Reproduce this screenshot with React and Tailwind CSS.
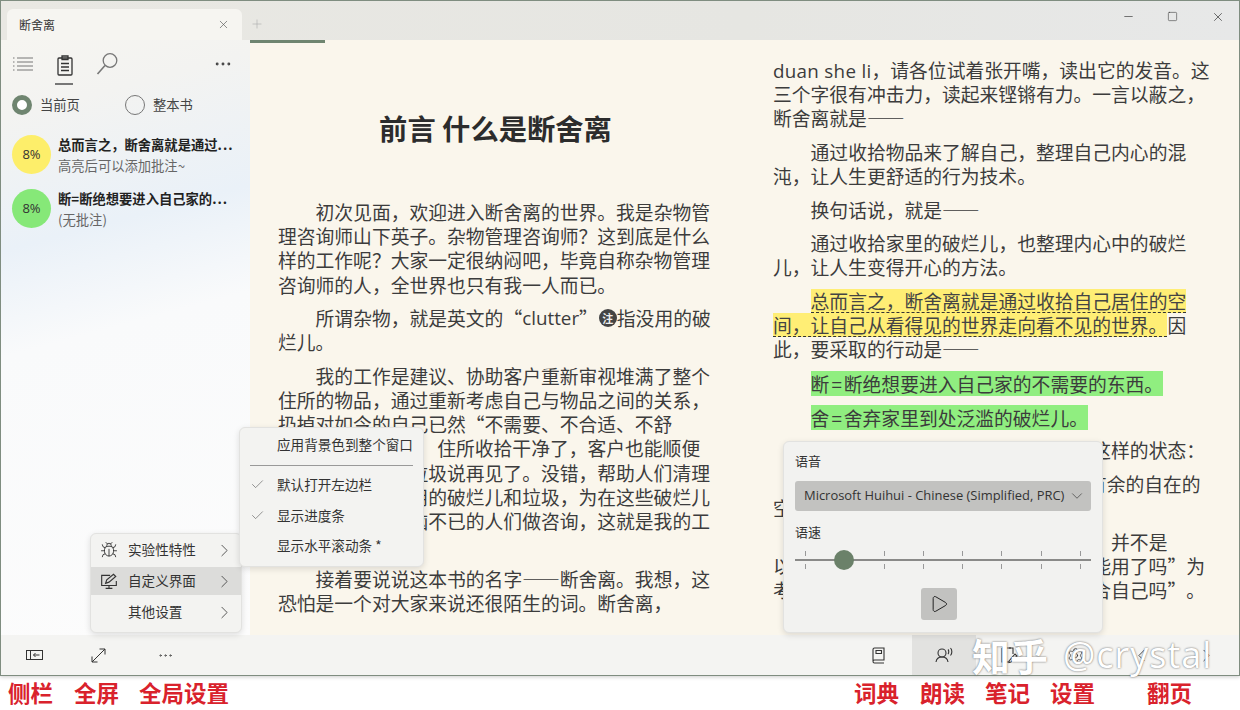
import React from "react";
import { Bug, ChevronRight, ChevronLeft, ChevronDown, Check, X, Minus, Square, Plus, MoreHorizontal, Play, Settings } from "lucide-react";

const LAT = "font-['Open_Sans',sans-serif]";

function P({ lines, indent = true }) {
  return (
    <div className="mb-[9.4px]">
      {lines.map((l, i) => (
        <div key={i} className={`h-[24.2px] whitespace-nowrap ${i === 0 && indent ? "pl-[37.6px]" : ""}`}>{l}</div>
      ))}
    </div>
  );
}

const Yellow = ({ children }) => (
  <span className="inline-block h-[24.2px] border-b border-dashed border-[#333] bg-[#ffee75] leading-[23px] text-[#444]">{children}</span>
);
const Green = ({ children }) => (
  <span className="inline-block h-[25px] bg-[#90ee80] leading-[25px]">{children}</span>
);
const Eq = () => <span className="mx-[2px]">=</span>;

function Reader() {
  return (
    <div className="flex h-full w-full overflow-hidden bg-[#faf6ec] pl-7 text-[18.8px] leading-[24.2px] text-[#3c3c3c] [text-spacing-trim:space-all]">
      <div className="w-[495px] shrink-0">
        <div className="flex w-[432px] justify-center pt-[68px] pb-[52px] pl-[3px] text-[28.3px] leading-10 font-bold text-[#2c2c2c]">前言 什么是断舍离</div>
        <P lines={["初次见面，欢迎进入断舍离的世界。我是杂物管", "理咨询师山下英子。杂物管理咨询师？这到底是什么", "样的工作呢？大家一定很纳闷吧，毕竟自称杂物管理", "咨询师的人，全世界也只有我一人而已。"]} />
        <P lines={[
          <span className="inline-flex h-[24.2px] items-center">所谓杂物，就是英文的“<span className={LAT}>clutter</span>”<span className="ml-[1px] inline-flex h-[18px] w-[18px] items-center justify-center rounded-full bg-[#444] text-[11px] font-bold text-[#eee]">注</span>指没用的破</span>,
          "烂儿。"]} />
        <P lines={["我的工作是建议、协助客户重新审视堆满了整个", "住所的物品，通过重新考虑自己与物品之间的关系，", "扔掉对如今的自己已然“不需要、不合适、不舒",
          <span>服”的所有物品。<span className="inline-block w-[9px]" />住所收拾干净了，客户也能顺便</span>,
          "和内心的破烂和垃圾说再见了。没错，帮助人们清理", "堆积在家中和没用的破烂儿和垃圾，为在这些破烂儿", "破烂儿和垃圾烦恼不已的人们做咨询，这就是我的工", "作。"]} />
        <P lines={["接着要说说这本书的名字——断舍离。我想，这", "恐怕是一个对大家来说还很陌生的词。断舍离，"]} />
      </div>
      <div className="w-[440px] shrink-0 pt-[18px]">
        <P indent={false} lines={[<span><span className={`${LAT} tracking-[0.3px]`}>duan she li</span>，请各位试着张开嘴，读出它的发音。这</span>, "三个字很有冲击力，读起来铿锵有力。一言以蔽之，", "断舍离就是——"]} />
        <P lines={["通过收拾物品来了解自己，整理自己内心的混", "沌，让人生更舒适的行为技术。"]} />
        <P lines={["换句话说，就是——"]} />
        <P lines={["通过收拾家里的破烂儿，也整理内心中的破烂", "儿，让人生变得开心的方法。"]} />
        <P lines={[
          <Yellow>总而言之，断舍离就是通过收拾自己居住的空</Yellow>,
          <span><Yellow>间，让自己从看得见的世界走向看不见的世界。</Yellow>因</span>,
          "此，要采取的行动是——"]} />
        <P lines={[<Green>断<Eq />断绝想要进入自己家的不需要的东西。</Green>]} />
        <P lines={[<Green>舍<Eq />舍弃家里到处泛滥的破烂儿。</Green>]} />
        <P lines={["通过不断重复断和舍，最后能达到这样的状态："]} />
        <P lines={[<span>离<Eq />脱离对物品的执念，处于游刃有余的自在的</span>, "空间。"]} />
        <P lines={["断舍离的主角是自己，思考的轴心　并不是", "以“这个东西还能不能用”“是否已经能用了吗”为", "考量标准，而是以“这个东西还适不适合自己吗”。"]} />
      </div>
    </div>
  );
}

function Sidebar() {
  return (
    <div className="flex w-[249px] shrink-0 flex-col bg-[linear-gradient(165deg,#f6f5f1_0%,#f3f3f1_12%,#eaf1f8_32%,#f9fafb_48%,#fcfcfc_100%)]">
      <div className="flex h-[47px] items-center pr-[17px] pl-[11px] text-[#4a4a4a]">
        <svg width="22" height="16" viewBox="0 0 22 16" fill="none" stroke="#777" strokeWidth="1">
          <path d="M5 2h16M5 6h16M5 10h16M5 14h16" />
          <path d="M1 2h1.5M1 6h1.5M1 10h1.5M1 14h1.5" />
        </svg>
        <div className="relative ml-[21px] flex h-[47px] w-[20px] items-center justify-center pt-1">
          <svg width="16" height="21" viewBox="0 0 16 21" fill="none" stroke="#333" strokeWidth="1.3">
            <rect x="1" y="3" width="14" height="17" rx="1" />
            <path d="M5 1h6v3.500H5zM4 8.500h8M4 12h8M4 15.500h8" />
          </svg>
          <div className="absolute top-[43px] left-0 h-[2px] w-[18px] bg-[#777]" />
        </div>
        <svg className="ml-[21px]" width="22" height="24" viewBox="0 0 22 24" fill="none" stroke="#777" strokeWidth="1.3">
          <circle cx="14" cy="8.500" r="6.800" />
          <path d="M9 13.500 1.500 22" strokeWidth="1.600" />
        </svg>
        <MoreHorizontal className="ml-auto" size={20} strokeWidth={1.5} color="#444" />
      </div>
      <div className="mt-[8px] flex h-5 items-center pl-[11px] text-[13.3px] text-[#444]">
        <span className="h-5 w-5 rounded-full border-[5px] border-[#6f8570] bg-white" />
        <span className="ml-2 w-[85px]">当前页</span>
        <span className="h-5 w-5 rounded-full border border-[#777]" />
        <span className="ml-2">整本书</span>
      </div>
      <div className="mt-[20px] flex h-[39px] items-center pl-[11px]">
        <div className={`flex h-[39px] w-[39px] shrink-0 items-center justify-center rounded-full bg-[#fdee6a] text-[13px] text-[#333] ${LAT}`}>8%</div>
        <div className="ml-[7px] min-w-0 whitespace-nowrap">
          <div className="text-[13.3px] leading-[21px] font-bold text-[#222]">总而言之，断舍离就是通过<span className="tracking-[1px]">...</span></div>
          <div className="text-[13.3px] leading-[21px] text-[#666]">高亮后可以添加批注~</div>
        </div>
      </div>
      <div className="mt-[15px] flex h-[39px] items-center pl-[11px]">
        <div className={`flex h-[39px] w-[39px] shrink-0 items-center justify-center rounded-full bg-[#86e878] text-[13px] text-[#333] ${LAT}`}>8%</div>
        <div className="ml-[7px] min-w-0 whitespace-nowrap">
          <div className="text-[13.3px] leading-[21px] font-bold text-[#222]">断=断绝想要进入自己家的<span className="tracking-[1px]">...</span></div>
          <div className="text-[13.3px] leading-[21px] text-[#666]">(无批注)</div>
        </div>
      </div>
    </div>
  );
}

function MenuRow({ icon, label, active }) {
  return (
    <div className={`relative flex h-[28px] items-center pr-[6px] pl-[37px] ${active ? "bg-[#dcdcda]" : ""}`}>
      {icon && <span className="absolute top-[5px] left-[9px]">{icon}</span>}
      <span className="pb-[2px] text-[13.6px] text-[#333]">{label}</span>
      <ChevronRight className="ml-auto" size={21} strokeWidth={1} color="#444" />
    </div>
  );
}

function Popovers() {
  return (
    <>
      <div className="absolute top-[533px] left-[90px] flex h-[100px] w-[152px] flex-col gap-[3px] rounded-md border border-[#e2e2e0] bg-[#f3f3f1] py-[2px] shadow-[0_2px_6px_rgba(0,0,0,0.12)]">
        <MenuRow icon={<Bug size={18} strokeWidth={1.2} color="#333" />} label="实验性特性" />
        <MenuRow active label="自定义界面" icon={
          <svg width="18" height="18" viewBox="0 0 16 16" fill="none" stroke="#333" strokeWidth="1">
            <path d="M9 3H1.500v9h13V8M8 12v2.500M5 14.500h6" />
            <path d="M5 10l1-3 6-5 2 2-6 5z" />
          </svg>} />
        <MenuRow label="其他设置" />
      </div>
      <div className="absolute top-[427px] left-[239px] h-[140px] w-[185px] rounded-md border border-[#e2e2e0] bg-[#f3f3f1] text-[13.6px] text-[#333] shadow-[0_2px_6px_rgba(0,0,0,0.12)]">
        <div className="flex h-[37px] items-center pb-[5px] pl-[37px]">应用背景色到整个窗口</div>
        <div className="mx-[10px] h-px bg-[#999]" />
        <div className="mt-[2px] flex h-[32px] items-center pl-[10px]"><Check size={15} strokeWidth={1.1} color="#666" /><span className="ml-[12px]">默认打开左边栏</span></div>
        <div className="flex h-[31px] items-center pl-[10px]"><Check size={15} strokeWidth={1.1} color="#666" /><span className="ml-[12px]">显示进度条</span></div>
        <div className="flex h-[29px] items-center pl-[37px]">显示水平滚动条 *</div>
      </div>
      <div className="absolute top-[441px] left-[783px] flex h-[192px] w-[320px] flex-col rounded-md border border-[#e2e2e0] bg-[#f2f2f0] px-[11px] text-[13px] text-[#333] shadow-[0_2px_6px_rgba(0,0,0,0.12)]">
        <div className="mt-[9px] leading-[20px]">语音</div>
        <div className="mt-[10px] flex h-[30px] items-center rounded-[3px] bg-[#c2c2c0] pr-[5px] pl-[9px] whitespace-nowrap text-[#333]">
          <span className={`text-[12.95px] ${LAT}`}>Microsoft Huihui - Chinese (Simplified, PRC)</span>
          <ChevronDown className="ml-auto" size={18} strokeWidth={1} color="#444" />
        </div>
        <div className="mt-[11px] leading-[20px]">语速</div>
        <div className="relative mt-[6px] h-[24px]">
          <div className="absolute top-[11px] right-0 left-0 h-[2px] bg-[#8a8a88]" />
          <div className="flex justify-between px-[10px]">
            {[0, 1, 2, 3, 4, 5, 6, 7].map((i) => (
              <div key={i} className="flex h-[24px] flex-col justify-between py-[3px]">
                <span className="h-[5px] w-px bg-[#999]" />
                <span className="h-[5px] w-px bg-[#999]" />
              </div>
            ))}
          </div>
          <div className="absolute top-[2px] left-[39px] h-[20px] w-[20px] rounded-full bg-[#6b8169]" />
        </div>
        <div className="mt-[16px] ml-[126px] flex h-[32px] w-[36px] items-center justify-center rounded-[3px] bg-[#c2c2c0]">
          <Play size={20} strokeWidth={1.2} color="#222" />
        </div>
      </div>
    </>
  );
}

function Bottom() {
  return (
    <div className="flex h-10 shrink-0 items-center bg-[#f4f4f2] text-[#444]">
      <div className="ml-[24px] flex w-[18px] justify-center">
        <svg width="17" height="10" viewBox="0 0 17 10" fill="none" stroke="#333" strokeWidth="1">
          <rect x="0.500" y="0.500" width="16" height="9" />
          <path d="M4.500 1v8M13.500 5H7.500M9.500 3l-2 2 2 2" />
        </svg>
      </div>
      <svg className="ml-[48px]" width="15" height="15" viewBox="0 0 15 15" fill="none" stroke="#333" strokeWidth="1">
        <path d="M1 14 14 1M8.500 1H14v5.500M1 8.500V14h5.500" />
      </svg>
      <MoreHorizontal className="ml-[51px]" size={17} strokeWidth={1.2} color="#444" />
      <div className="ml-auto flex h-full items-center">
        <div className="flex h-full w-[68px] items-center justify-center">
          <svg width="15" height="17" viewBox="0 0 15 17" fill="none" stroke="#333" strokeWidth="1.100">
            <path d="M2 14V2.500A1.500 1.500 0 0 1 3.500 1H13v12H3.500a1.500 1.500 0 0 0 0 3H13" />
            <path d="M5 3.500h5.500v3H5z" />
          </svg>
        </div>
        <div className="flex h-full w-[64px] items-center justify-center bg-[#e2e2e0]">
          <svg width="18" height="16" viewBox="0 0 18 16" fill="none" stroke="#333" strokeWidth="1.100">
            <circle cx="7" cy="6" r="4" />
            <path d="M1 15c.5-3.500 3-5 6-5s5.500 1.500 6 5M13 2.500c1 1 1 3.500 0 4.500M15.500 1c1.800 2 1.800 5.500 0 7.500" />
          </svg>
        </div>
        <div className="flex h-full w-[66px] items-center justify-center">
          <svg width="18" height="18" viewBox="0 0 18 18" fill="none" stroke="#333" strokeWidth="1.100">
            <path d="M2 2h11v6M2 2v14h7M5 1v2M10 1v2M9 15l6-7 2 2-6 6-2 .5z" />
          </svg>
        </div>
        <div className="flex h-full w-[66px] items-center justify-center"><Settings size={17} strokeWidth={1.1} color="#333" /></div>
        <div className="flex h-full w-[66px] items-center justify-center"><ChevronLeft size={21} strokeWidth={1} color="#333" /></div>
        <div className="flex h-full w-[65px] items-center justify-center"><ChevronRight size={21} strokeWidth={1} color="#333" /></div>
      </div>
    </div>
  );
}

export default function App() {
  return (
    <div lang="zh-CN" className="relative h-[710px] w-[1240px] overflow-hidden bg-white font-['Noto_Sans_CJK_SC','Open_Sans',sans-serif]">
      <div className="flex h-[676px] flex-col border border-[#7f8d80] shadow-[0_1px_4px_rgba(0,0,0,0.2)]">
        <div className="flex h-[39px] shrink-0 items-end bg-[linear-gradient(90deg,#e9e8e3_0%,#e6e6e2_60%,#e7e8e8_100%)]">
          <div className="ml-[6px] flex h-[31px] w-[235px] items-center rounded-t-md bg-[#f6f5f1] px-[12px] text-[12px] text-[#333]">
            断舍离
            <X className="ml-auto" size={13} strokeWidth={1.2} color="#555" />
          </div>
          <Plus className="mb-[9px] ml-[8px]" size={14} strokeWidth={1} color="#aaa" />
          <div className="ml-auto flex h-[39px] items-start pt-[9px] pr-[14px]">
            <Minus size={13} strokeWidth={1.2} color="#333" />
            <Square className="mt-[1px] ml-[32px]" size={11} strokeWidth={1.2} color="#333" />
            <X className="ml-[33px]" size={14} strokeWidth={1.2} color="#333" />
          </div>
        </div>
        <div className="relative flex min-h-0 flex-1">
          <Sidebar />
          <div className="relative min-w-0 flex-1">
            <Reader />
            <div className="absolute top-0 left-0 h-[3px] w-[75px] bg-[#6f8570]" />
          </div>
        </div>
        <Bottom />
      </div>
      <div className="flex h-[34px] items-center pb-[2px] text-[22.5px] leading-none font-bold text-[#d9222c]">
        <span className="ml-[8px]">侧栏</span>
        <span className="ml-[21px]">全屏</span>
        <span className="ml-[20px]">全局设置</span>
        <span className="ml-[625px]">词典</span>
        <span className="ml-[21px]">朗读</span>
        <span className="ml-[20px]">笔记</span>
        <span className="ml-[20px]">设置</span>
        <span className="ml-[52px]">翻页</span>
      </div>
      <Popovers />
      <div className="absolute top-[632px] left-[972px] flex items-center whitespace-nowrap text-white [text-shadow:0_0_2px_#555]">
        <span className="text-[38px] leading-[46px] font-bold">知乎</span>
        <span className={`ml-[15px] text-[36px] leading-[46px] tracking-[1px] ${LAT}`}>@crystal</span>
      </div>
    </div>
  );
}
